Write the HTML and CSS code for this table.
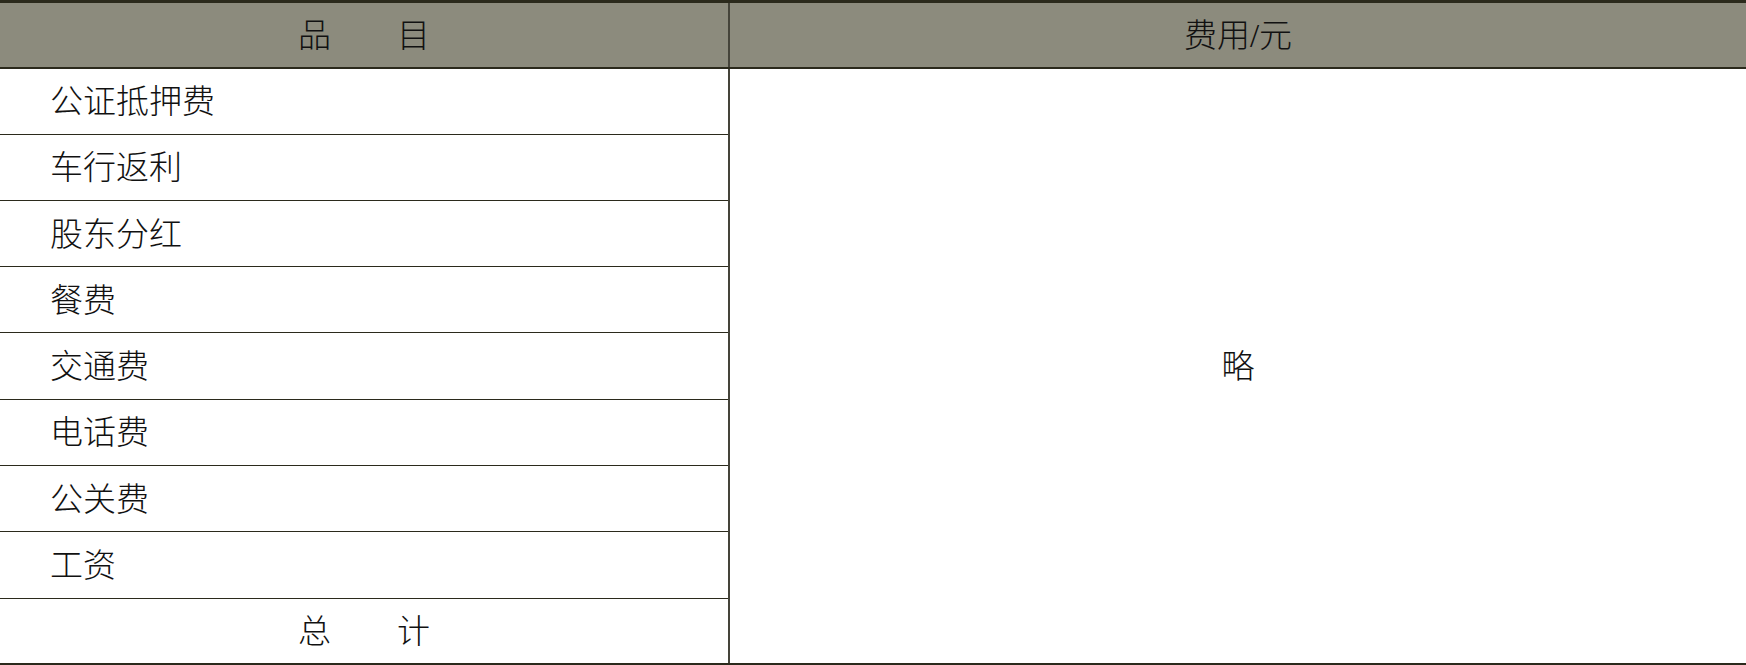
FILE: index.html
```html
<!DOCTYPE HTML><html>
<head>
  <title>费用表</title>
  <meta charset="utf-8">
  <meta name="viewport" content="width=device-width, initial-scale=1">
  <link rel="stylesheet" href="styles.css">
</head>
<body>
  <table class="cost_table">
    <colgroup>
      <col class="col_item">
      <col class="col_cost">
    </colgroup>
    <tr class="head_row">
      <th>品　　目</th>
      <th>费用/元</th>
    </tr>
    <tr>
      <td class="item">公证抵押费</td>
      <td class="cost" rowspan="9">略</td>
    </tr>
    <tr><td class="item">车行返利</td></tr>
    <tr><td class="item">股东分红</td></tr>
    <tr><td class="item">餐费</td></tr>
    <tr><td class="item">交通费</td></tr>
    <tr><td class="item">电话费</td></tr>
    <tr><td class="item">公关费</td></tr>
    <tr><td class="item">工资</td></tr>
    <tr><td class="total">总　　计</td></tr>
  </table>
</body>
</html>
```

FILE: styles.css
```css
html {
  font-family: "Liberation Serif", "Noto Sans CJK SC", serif;
}
body {
  margin: 0;
  background-color: #fff;
}
.cost_table {
  width: 100%;
  border-collapse: collapse;
  table-layout: fixed;
  font-size: 33px;
  font-weight: 300;
  color: #111;
}
.col_item {
  width: 729px;
}
.cost_table tr {
  height: 66.3px;
}
.head_row {
  background-color: #8c8b7d;
}
.head_row th {
  font-weight: 300;
  text-align: center;
  padding: 0 0 4px 0;
  border-top: 3px solid #2b2a1c;
  border-bottom: 2px solid #2b2a1c;
}
.cost_table th + th {
  border-left: 2px solid #45443a;
}
.cost_table td {
  padding: 0 0 4px 0;
  border-bottom: 1px solid #2b2a1c;
}
.item {
  padding-left: 50px !important;
  text-align: left;
}
.total {
  text-align: center;
  border-bottom: 2px solid #2b2a1c !important;
}
.cost {
  text-align: center;
  vertical-align: middle;
  border-left: 2px solid #45443a;
  border-bottom: 2px solid #2b2a1c !important;
}
```
